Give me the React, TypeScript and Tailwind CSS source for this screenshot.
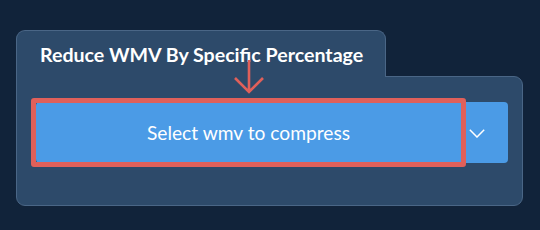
export default function App() {
  return (
    <div className="relative h-[230px] w-[540px] bg-[#11233a] pl-4 pt-[30px] font-['Lato','Liberation_Sans',sans-serif] text-white">
      {/* tab */}
      <div className="relative z-10 -mb-px h-[47px] w-[370px] rounded-t-[9px] border border-b-0 border-[#4a6686] bg-[#2d4a6a] pl-[23px] pt-[12px]">
        <h2 className="text-[19.6px] leading-[24px] font-bold">Reduce WMV By Specific Percentage</h2>
      </div>

      {/* panel */}
      <div className="h-[130px] w-[507px] rounded-b-[9px] rounded-tr-[9px] border border-[#4a6686] bg-[#2d4a6a] pl-[19px] pt-[25px]">
        <div className="flex h-[61px] w-[472px] rounded-[4px] bg-[#4b9be6]">
          <button className="relative flex h-full w-[425px] items-center justify-center text-[19.2px] leading-[24px] font-normal">
            Select wmv to compress
            <span className="pointer-events-none absolute -top-[4px] -bottom-[4px] -left-[5px] -right-[5px] rounded-[3px] border-[5px] border-[#e0605a]" />
          </button>
          <div className="flex flex-1 items-center pl-[8px] pt-[1px]">
            <svg width="16" height="9" viewBox="0 0 16 9">
              <path d="M0.8 0.8 L8 8 L15.2 0.8" fill="none" stroke="white" strokeWidth="1.5" />
            </svg>
          </div>
        </div>
      </div>

      {/* annotation arrow */}
      <svg className="pointer-events-none absolute left-[230px] top-[56px] z-20" width="38" height="40" viewBox="0 0 38 40">
        <path d="M19 4 V36 M5 22 L19 36 L33 22" fill="none" stroke="#e0605a" strokeWidth="2.6" />
      </svg>
    </div>
  );
}
